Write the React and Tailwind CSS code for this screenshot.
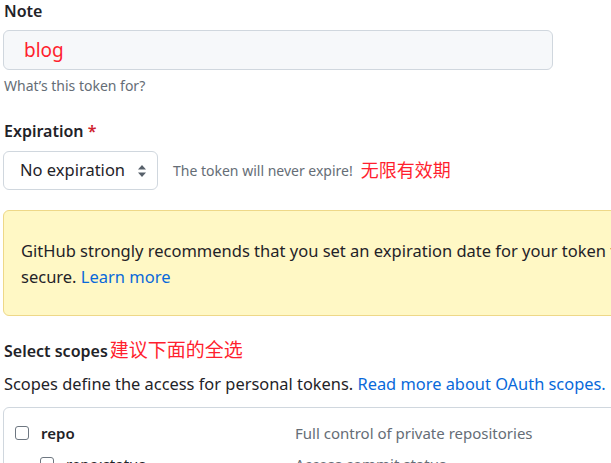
import React from "react";

const font = { fontFamily: '"Noto Sans", "Noto Sans CJK SC", sans-serif' };

const Checkbox = () => (
  <span className="inline-block w-[14px] h-[14px] rounded-[3px] border border-[#6e7781] bg-white shrink-0" />
);

const SelectArrows = () => (
  <svg width="10" height="14" viewBox="0 0 10 14" className="text-[#57606a]">
    <path d="M5 1 L9 5.5 L1 5.5 Z" fill="currentColor" />
    <path d="M5 13 L9 8.5 L1 8.5 Z" fill="currentColor" />
  </svg>
);

export default function App() {
  return (
    <div
      className="w-[611px] h-[463px] overflow-hidden bg-white text-[#1f2328]"
      style={font}
    >
      <div className="w-[760px] pl-[4px]">
        {/* Note */}
        <div className="text-[16px] font-semibold leading-[22px]">Note</div>
        <div className="mt-[8px] ml-[-1px] w-[550px] h-[40px] rounded-[6px] border border-[#d0d7de] bg-[#f6f8fa] flex items-center pl-[20px]">
          <span className="text-[19px] text-[#ff1f2f]">blog</span>
        </div>
        <div className="mt-[7px] text-[14px] text-[#656d76] leading-[18px]">What’s this token for?</div>

        {/* Expiration */}
        <div className="mt-[25px] text-[16px] font-semibold leading-[22px]">
          Expiration <span className="text-[#cf222e]">*</span>
        </div>
        <div className="mt-[9px] flex items-center">
          <div className="ml-[-1px] w-[155px] h-[39px] rounded-[6px] border border-[#d0d7de] bg-white flex items-center justify-between pl-[16px] pr-[10px]">
            <span className="text-[16.5px]">No expiration</span>
            <SelectArrows />
          </div>
          <span className="ml-[15px] text-[14px] text-[#656d76]">The token will never expire!</span>
          <span className="ml-[8px] text-[18px] text-[#ff1f2f]">无限有效期</span>
        </div>

        {/* Warning banner */}
        <div className="mt-[20px] ml-[-1px] rounded-[6px] border border-[#eed888] bg-[#fff8c5] pt-[27px] pb-[25px] pl-[17px] text-[16.5px] leading-[26px]">
          <div className="whitespace-nowrap">
            GitHub strongly recommends that you set an expiration date for your token to help keep your information
          </div>
          <div>
            secure. <span className="text-[#0969da]">Learn more</span>
          </div>
        </div>

        {/* Scopes */}
        <div className="mt-[22px] flex items-baseline leading-[24px]">
          <span className="text-[16px] font-semibold">Select scopes</span>
          <span className="ml-[2px] text-[19px] text-[#ff1f2f]">建议下面的全选</span>
        </div>
        <div className="mt-[9px] text-[16.4px] leading-[24px] whitespace-nowrap">
          Scopes define the access for personal tokens.{" "}
          <span className="text-[#0969da]">Read more about OAuth scopes.</span>
        </div>

        <div className="mt-[11px] ml-[-1px] rounded-[6px] border border-[#d0d7de] pt-[14px]">
          <div className="flex items-center pl-[11px]">
            <Checkbox />
            <span className="ml-[12px] w-[254px] text-[15px] font-semibold">repo</span>
            <span className="text-[15px] text-[#656d76]">Full control of private repositories</span>
          </div>
          <div className="mt-[8px] flex items-center pl-[36px]">
            <Checkbox />
            <span className="ml-[12px] w-[229px] text-[15px]">repo:status</span>
            <span className="text-[15px] text-[#656d76]">Access commit status</span>
          </div>
        </div>
      </div>
    </div>
  );
}
